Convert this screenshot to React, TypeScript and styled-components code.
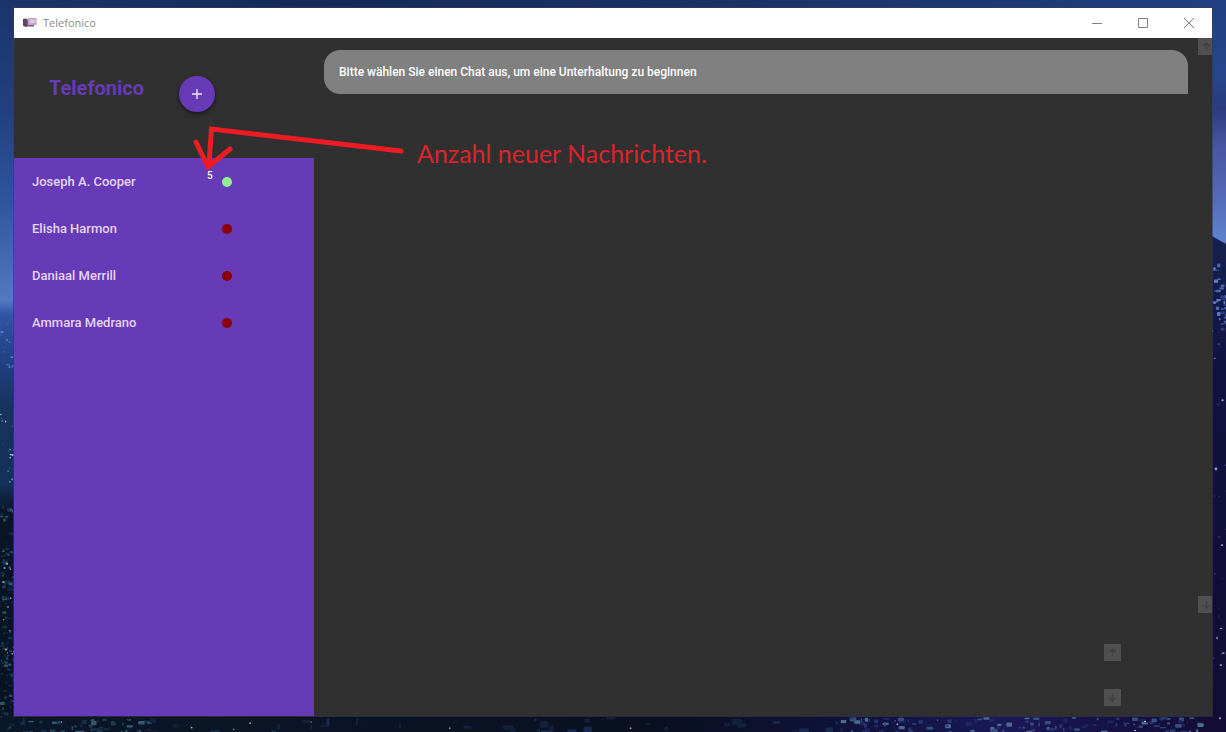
import React from "react";
import styled, { createGlobalStyle } from "styled-components";

const purple = "#673ab7";
const surface = "#303030";
const red = "#ed1c24";

const GlobalStyle = createGlobalStyle`
  * { box-sizing: border-box; }
  body { margin: 0; font-family: Roboto, "Liberation Sans", sans-serif; }
  button, textarea { font: inherit; }
`;

const Desktop = styled.div`
  position: relative;
  display: flex;
  min-height: 100vh;
  padding: 8px 14px 16px;
  background: #0a1226;
`;

const WallpaperSvg = styled.svg`
  position: absolute;
  inset: 0;
  width: 100%;
  height: 100%;
`;

const AppWindow = styled.div`
  position: relative;
  flex: 1;
  display: flex;
  flex-direction: column;
  background: ${surface};
  box-shadow: 0 0 0 1px rgba(60, 60, 70, 0.6);
`;

const TitleBar = styled.header`
  display: flex;
  align-items: center;
  height: 30px;
  padding-left: 9px;
  background: #fff;
`;

const WindowTitle = styled.span`
  flex: 1;
  margin-left: 6px;
  color: #8a8a8a;
  font: 11px/16px "Open Sans", "Noto Sans", sans-serif;
`;

const CaptionButton = styled.button`
  display: grid;
  place-items: center;
  width: 46px;
  height: 30px;
  padding: 0;
  border: 0;
  background: none;
  color: #808080;
`;

const Body = styled.div`
  flex: 1;
  display: flex;
`;

const Sidebar = styled.aside`
  display: flex;
  flex-direction: column;
  flex: 0 0 300px;
`;

const SidebarHeader = styled.div`
  display: flex;
  align-items: flex-start;
  height: 120px;
  padding: 38px 35px 0;
`;

const Brand = styled.h1`
  width: 130px;
  margin: 0;
  color: ${purple};
  font-size: 20px;
  font-weight: 700;
  line-height: 24px;
`;

const AddButton = styled.button`
  display: grid;
  place-items: center;
  width: 36px;
  height: 36px;
  padding: 0;
  border: 0;
  border-radius: 50%;
  background: ${purple};
  color: #eee4f8;
  box-shadow: 0 2px 4px rgba(0, 0, 0, 0.5);
`;

const ContactList = styled.ul`
  flex: 1;
  margin: 0;
  padding: 0;
  list-style: none;
  background: ${purple};
`;

const Contact = styled.button`
  display: grid;
  grid-template-columns: 175px 15px 10px;
  align-items: center;
  width: 100%;
  height: 47px;
  padding: 0 18px;
  border: 0;
  background: none;
  color: #e3d5f3;
  text-align: left;
`;

const ContactName = styled.span`
  font-size: 13px;
  font-weight: 500;
  line-height: 16px;
`;

const Unread = styled.span`
  align-self: start;
  padding-top: 12px;
  color: #fff;
  font-size: 10px;
  font-weight: 500;
  line-height: 12px;
`;

const Presence = styled.span<{ $online: boolean }>`
  width: 10px;
  height: 10px;
  border-radius: 50%;
  background: ${(p) => (p.$online ? "#90ee90" : "#8b0000")};
`;

const Conversation = styled.main`
  flex: 1;
  display: flex;
  flex-direction: column;
  min-width: 0;
`;

const Messages = styled.section`
  flex: 1;
  display: flex;
  overflow: hidden;
`;

const MessageFlow = styled.div`
  flex: 1;
  padding: 12px 10px;
`;

const Bubble = styled.p`
  margin: 0;
  padding: 14px 15px;
  border-radius: 16px 16px 0 16px;
  background: #808080;
  color: #fff;
  font-size: 12px;
  font-weight: 500;
  line-height: 16px;
`;

const ScrollRail = styled.div<{ $clipped?: boolean }>`
  display: flex;
  flex: 0 0 17px;
  flex-direction: column;
  justify-content: space-between;
  margin-right: ${(p) => (p.$clipped ? "-3px" : "0")};
`;

const ScrollButton = styled.button`
  display: grid;
  place-items: center;
  width: 17px;
  height: 17px;
  padding: 0;
  border: 0;
  background: #505050;
  color: #404040;
`;

const Composer = styled.form`
  display: flex;
  height: 103px;
  padding: 31px 91px 10px 10px;
`;

const MessageInput = styled.textarea`
  flex: 1;
  padding: 8px;
  border: 0;
  outline: 0;
  resize: none;
  background: transparent;
  color: #fff;
  font-size: 12px;
`;

const Annotation = styled.div`
  position: absolute;
  top: 117px;
  left: 179px;
  display: flex;
  color: ${red};
  pointer-events: none;
`;

const AnnotationText = styled.span`
  margin: 12px 0 0 13px;
  color: #dc242b;
  font: 25px/32px Lato, "Open Sans", sans-serif;
  white-space: nowrap;
`;

const contacts = [
  { name: "Joseph A. Cooper", online: true, unread: 5 },
  { name: "Elisha Harmon", online: false },
  { name: "Daniaal Merrill", online: false },
  { name: "Ammara Medrano", online: false },
];

type Speck = { x: number; y: number; w: number; h: number; color: string };

// Deterministic noise keeps the lights and foliage stable between renders.
function scatter(
  seed: number,
  count: number,
  area: [number, number, number, number],
  colors: string[],
  size: number
): Speck[] {
  let s = seed;
  const next = () => {
    s = (s * 16807) % 2147483647;
    return s / 2147483647;
  };
  return Array.from({ length: count }, () => ({
    x: area[0] + next() * area[2],
    y: area[1] + next() * area[3],
    w: 1 + next() * size,
    h: 1 + next() * size * 0.6,
    color: colors[Math.floor(next() * colors.length)],
  }));
}

const specks: Speck[] = [
  ...scatter(11, 14, [0, 308, 14, 60], ["#4f77c4", "#3c62ae"], 3),
  ...scatter(23, 16, [0, 412, 14, 70], ["#8fb0d8", "#244a80", "#c8d8ee"], 2),
  ...scatter(37, 110, [0, 505, 14, 227], ["#1c3c52", "#152f49", "#2b5566", "#10263c"], 4),
  ...scatter(41, 14, [2, 530, 11, 130], ["#9aa78e", "#6d8fa0"], 2),
  ...scatter(53, 34, [1212, 262, 14, 70], ["#4e67b2", "#5c78c6", "#2c3c86"], 5),
  ...scatter(67, 30, [1212, 340, 14, 390], ["#2b3474", "#8c90c8", "#1d2258"], 3),
  ...scatter(71, 50, [20, 717, 130, 15], ["#1d3b54", "#35586e", "#16304c"], 6),
  ...scatter(83, 34, [150, 717, 700, 15], ["#12203c", "#182a50"], 10),
  ...scatter(97, 130, [840, 717, 360, 15], ["#253570", "#35507e", "#1c2560", "#4d6a8c"], 6),
  ...scatter(101, 10, [60, 718, 1140, 12], ["#d8e4ee"], 1),
];

function Wallpaper() {
  return (
    <WallpaperSvg viewBox="0 0 1226 732" preserveAspectRatio="none" aria-hidden="true">
      <defs>
        <linearGradient id="sky-left" x1="0" y1="0" x2="0" y2="1">
          <stop offset="0" stopColor="#1b356c" />
          <stop offset="0.15" stopColor="#213f80" />
          <stop offset="0.28" stopColor="#3056a0" />
          <stop offset="0.41" stopColor="#5478c2" />
          <stop offset="0.43" stopColor="#3154a4" />
          <stop offset="0.5" stopColor="#203f7e" />
          <stop offset="0.56" stopColor="#17325e" />
          <stop offset="0.66" stopColor="#14315a" />
          <stop offset="0.7" stopColor="#0a1526" />
          <stop offset="1" stopColor="#081422" />
        </linearGradient>
        <linearGradient id="sky-right" x1="0" y1="0" x2="0" y2="1">
          <stop offset="0" stopColor="#213e82" />
          <stop offset="0.1" stopColor="#27458c" />
          <stop offset="0.15" stopColor="#2b3c7e" />
          <stop offset="0.2" stopColor="#4757a4" />
          <stop offset="0.25" stopColor="#5263b2" />
          <stop offset="0.33" stopColor="#5f83d0" />
          <stop offset="0.34" stopColor="#16204e" />
          <stop offset="0.5" stopColor="#11133f" />
          <stop offset="1" stopColor="#120c32" />
        </linearGradient>
        <linearGradient id="sky-top">
          <stop offset="0" stopColor="#1b356c" />
          <stop offset="0.25" stopColor="#15295a" />
          <stop offset="0.6" stopColor="#1a3268" />
          <stop offset="1" stopColor="#213e82" />
        </linearGradient>
        <linearGradient id="ground">
          <stop offset="0" stopColor="#0a1728" />
          <stop offset="0.55" stopColor="#0a1022" />
          <stop offset="0.68" stopColor="#0f1238" />
          <stop offset="0.82" stopColor="#1a1858" />
          <stop offset="1" stopColor="#120c32" />
        </linearGradient>
      </defs>
      <rect width="613" height="732" fill="url(#sky-left)" />
      <rect x="613" width="613" height="732" fill="url(#sky-right)" />
      <rect width="1226" height="8" fill="url(#sky-top)" />
      <rect y="716" width="1226" height="16" fill="url(#ground)" />
      <path d="M1212 236 L1226 244 V252 H1212Z" fill="#16204e" />
      {specks.map((p, i) => (
        <rect key={i} x={p.x} y={p.y} width={p.w} height={p.h} rx="1" fill={p.color} />
      ))}
    </WallpaperSvg>
  );
}

function AppIcon() {
  return (
    <svg width="14" height="12" viewBox="0 0 14 12" aria-hidden="true">
      <path d="M0 2 4 1.500v8.500L1.500 9.500 0 8.500Z" fill="#5c4266" />
      <path d="M3 2.500h8v7H4Z" fill="#76597f" />
      <path d="M5 1h8.500v7H5Z" fill="#c4a3ca" />
      <path d="M6.500 2.500h5.500v3.500H6.500Z" fill="#dfcbe3" />
    </svg>
  );
}

function Arrow({ down = false }: { down?: boolean }) {
  return (
    <svg width="9" height="9" viewBox="0 0 9 9" fill="none" stroke="currentColor" strokeWidth="1.4" aria-hidden="true">
      <path d={down ? "M4.5 1v7M1.5 5l3 3 3-3" : "M4.5 8V1M1.5 4l3-3 3 3"} />
    </svg>
  );
}

function Scroller({ clipped }: { clipped?: boolean }) {
  return (
    <ScrollRail $clipped={clipped}>
      <ScrollButton type="button" disabled aria-label="Nach oben">
        <Arrow />
      </ScrollButton>
      <ScrollButton type="button" disabled aria-label="Nach unten">
        <Arrow down />
      </ScrollButton>
    </ScrollRail>
  );
}

export default function App() {
  return (
    <Desktop>
      <GlobalStyle />
      <Wallpaper />
      <AppWindow>
        <TitleBar>
          <AppIcon />
          <WindowTitle>Telefonico</WindowTitle>
          <CaptionButton aria-label="Minimieren">
            <svg width="10" height="10" stroke="currentColor" fill="none"><path d="M0 5.5h10" /></svg>
          </CaptionButton>
          <CaptionButton aria-label="Maximieren">
            <svg width="10" height="10" stroke="currentColor" fill="none"><path d="M.5.5h9v9h-9Z" /></svg>
          </CaptionButton>
          <CaptionButton aria-label="Schließen">
            <svg width="10" height="10" stroke="currentColor" fill="none"><path d="m0 0 10 10M10 0 0 10" /></svg>
          </CaptionButton>
        </TitleBar>
        <Body>
          <Sidebar>
            <SidebarHeader>
              <Brand>Telefonico</Brand>
              <AddButton aria-label="Neuer Chat">
                <svg width="10" height="10" fill="none" stroke="currentColor" strokeWidth="1.4">
                  <path d="M5 0v10M0 5h10" />
                </svg>
              </AddButton>
            </SidebarHeader>
            <ContactList>
              {contacts.map((c) => (
                <li key={c.name}>
                  <Contact type="button">
                    <ContactName>{c.name}</ContactName>
                    <Unread>{c.unread}</Unread>
                    <Presence $online={c.online} />
                  </Contact>
                </li>
              ))}
            </ContactList>
          </Sidebar>
          <Conversation>
            <Messages>
              <MessageFlow>
                <Bubble>Bitte wählen Sie einen Chat aus, um eine Unterhaltung zu beginnen</Bubble>
              </MessageFlow>
              <Scroller clipped />
            </Messages>
            <Composer>
              <MessageInput aria-label="Nachricht" />
              <Scroller />
            </Composer>
          </Conversation>
        </Body>
        <Annotation>
          <svg width="211" height="46" viewBox="0 0 211 46" fill="none" stroke="currentColor" strokeWidth="5" strokeLinecap="round" strokeLinejoin="miter" aria-hidden="true">
            <path d="M208 26 18.500 4 16 39M3 17l12 25 22-18" />
            <path d="m7 30 9 8 10-6-10 12Z" fill="currentColor" stroke="none" />
          </svg>
          <AnnotationText>Anzahl neuer Nachrichten.</AnnotationText>
        </Annotation>
      </AppWindow>
    </Desktop>
  );
}
